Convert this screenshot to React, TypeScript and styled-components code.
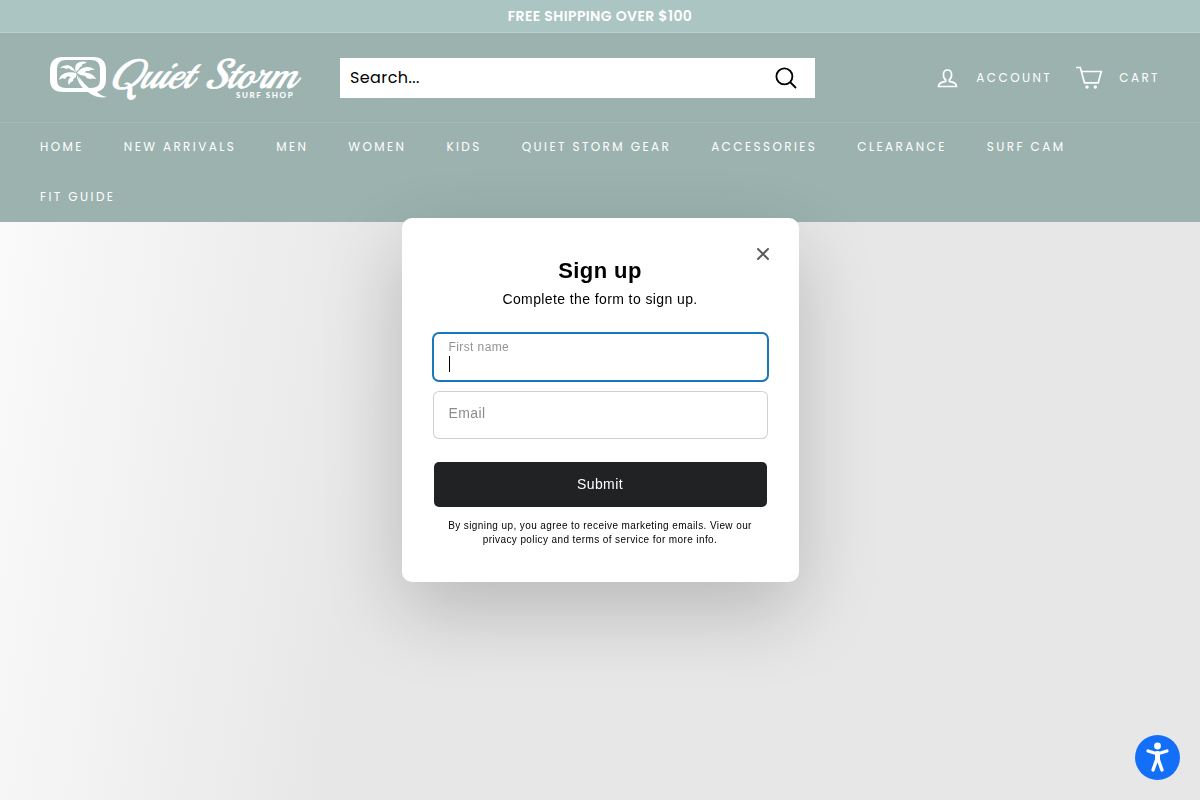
import React, { useState } from "react";
import styled, { createGlobalStyle } from "styled-components";

const GlobalStyle = createGlobalStyle`
  *, *::before, *::after { box-sizing: border-box; }
  body {
    margin: 0;
    background: #e7e7e7;
    color: #000;
    font-family: Poppins, Inter, "Liberation Sans", sans-serif;
    letter-spacing: 0.025em;
    text-rendering: optimizeSpeed;
  }
  button, input { font: inherit; letter-spacing: inherit; color: inherit; text-rendering: inherit; }
`;

const Page = styled.div`
  min-height: 100vh;
  display: flex;
  flex-direction: column;
`;

const Announcement = styled.div`
  height: 33px;
  border-bottom: 1px solid #b9d0cc;
  background: #abc6c2;
  color: #fff;
  font-size: 14px;
  font-weight: 600;
  line-height: 32px;
  text-align: center;
`;

const Header = styled.header`
  background: #9bb2af;
  color: #fff;
`;

const HeaderMain = styled.div`
  display: flex;
  align-items: center;
  height: 90px;
  padding: 0 40px;
  border-bottom: 1px solid #a5bab7;
`;

const LogoLink = styled.a`
  display: flex;
  flex: 0 0 300px;
  padding-left: 10px;
  color: #fff;
`;

const LogoArt = styled.svg`
  width: 256px;
  height: 44px;
  overflow: visible;
`;

const SearchForm = styled.form`
  display: flex;
  align-items: center;
  flex: 0 1 475px;
  height: 40px;
  background: #fff;
  color: #000;
`;

const SearchInput = styled.input`
  flex: 1;
  min-width: 0;
  height: 40px;
  padding: 0 10px;
  border: 0;
  outline: 0;
  background: transparent;
  font-size: 16px;
  &::placeholder { color: #000; opacity: 1; }
`;

const IconButton = styled.button`
  display: flex;
  align-items: center;
  justify-content: center;
  padding: 0;
  border: 0;
  background: transparent;
  cursor: pointer;
`;

const SearchButton = styled(IconButton)`
  width: 58px;
  height: 40px;
`;

const HeaderTools = styled.div`
  display: flex;
  align-items: center;
  gap: 24px;
  margin-left: auto;
`;

const ToolLink = styled.a`
  display: flex;
  align-items: center;
  gap: 15px;
  color: #fff;
  font-size: 12px;
  letter-spacing: 0.2em;
  text-decoration: none;
  text-transform: uppercase;
`;

const Nav = styled.nav`
  padding: 0 40px;
`;

const NavList = styled.ul`
  display: flex;
  flex-wrap: wrap;
  column-gap: 40px;
  margin: 0;
  padding: 0;
  list-style: none;
`;

const NavLink = styled.a`
  display: block;
  color: #fff;
  font-size: 12px;
  line-height: 48px;
  padding-bottom: 2px;
  letter-spacing: 0.2em;
  text-decoration: none;
  text-transform: uppercase;
`;

const Hero = styled.main`
  flex: 1;
  margin-top: -1px;
  background: linear-gradient(98deg, #fafafa 0, #e7e7e7 400px);
`;

const Overlay = styled.div`
  position: fixed;
  inset: 0;
  display: flex;
  align-items: center;
  justify-content: center;
`;

const Dialog = styled.section`
  position: relative;
  width: 397px;
  max-width: 100%;
  padding: 39px 32px 35px;
  border-radius: 10px;
  background: #fff;
  box-shadow: 0 30px 80px rgba(0, 0, 0, 0.2);
  font-family: "Liberation Sans", Arial, sans-serif;
  text-align: center;
`;

const CloseButton = styled(IconButton)`
  position: absolute;
  top: 20px;
  right: 20px;
  width: 32px;
  height: 32px;
  color: #5c5c5c;
`;

const Title = styled.h2`
  margin: 0;
  font-size: 22px;
  line-height: 28px;
`;

const Subtitle = styled.p`
  margin: 4px 0 25px;
  font-size: 14px;
  line-height: 20px;
`;

const Fields = styled.div`
  display: flex;
  flex-direction: column;
  gap: 12px;
`;

const Field = styled.div<{ $focused?: boolean }>`
  display: flex;
  flex-direction: column;
  height: 46px;
  padding: 5px 15px;
  border-radius: 5px;
  box-shadow: 0 0 0 ${(p) => (p.$focused ? "2px #1878b9" : "1px #d0d0d0")};
  text-align: left;
`;

const FieldLabel = styled.label`
  color: #949494;
  font-size: 12px;
  line-height: 16px;
`;

const InputRow = styled.div`
  display: flex;
  align-items: center;
  height: 18px;
`;

const Caret = styled.span`
  width: 1px;
  height: 16px;
  background: #000;
`;

const TextInput = styled.input`
  flex: 1;
  width: 100%;
  min-width: 0;
  padding: 0;
  border: 0;
  outline: 0;
  background: transparent;
  font-size: 14px;
  line-height: 18px;
  &::placeholder { color: #8c8c8c; opacity: 1; }
`;

const EmailInput = styled(TextInput)`
  flex: none;
  height: 32px;
`;

const SubmitButton = styled.button`
  display: block;
  width: 100%;
  height: 45px;
  margin: 24px 0 12px;
  padding: 0 0 2px;
  border: 0;
  border-radius: 5px;
  background: #212224;
  color: #fff;
  font-size: 14px;
  cursor: pointer;
`;

const Legal = styled.p`
  margin: 0;
  font-size: 10px;
  line-height: 14px;
`;

const AccessibilityButton = styled(IconButton)`
  position: fixed;
  right: 20px;
  bottom: 20px;
  width: 45px;
  height: 45px;
  border-radius: 50%;
  background: #146ff8;
`;

const navItems = [
  "Home", "New Arrivals", "Men", "Women", "Kids", "Quiet Storm Gear",
  "Accessories", "Clearance", "Surf Cam", "Fit Guide",
];

function Logo() {
  return (
    <LogoArt viewBox="0 0 256 44" role="img" aria-label="Quiet Storm Surf Shop" fill="#fff">
      <path
        fillRule="evenodd"
        d="M13 1H43Q56 1 56 14V24Q56 33 47 36Q51 40 57 41Q46 43 38 36H13Q0 36 0 24V14Q0 1 13 1ZM16 4Q7 4 7 13V24Q7 32 16 32H34Q30 27 28 20Q33 27 39 32H41Q50 32 50 24V13Q50 4 41 4Z"
      />
      <path d="M26 17C23 9 16 7 10 12Q14 11 16 13Q19 11 21 14Q24 14 26 17ZM26 16C23 8 29 4 37 6L34 8Q32 7 32 10Q29 11 29 13ZM27 17C31 10 40 9 45 14Q41 13 39 15Q36 14 34 17ZM27 17C35 15 44 18 46 23Q42 22 40 23Q37 23 35 20Q31 20 27 17ZM26 17C19 15 10 17 9 24Q12 21 15 23Q17 19 20 21ZM26 17C21 20 16 24 19 29Q20 26 23 25Q23 22 26 21Z" />
      <path d="M26 16Q29 29 43 36L36 35Q27 28 26 16Z" />
      <text x="58" y="32" fontFamily="Playball, Yesteryear, 'Dancing Script', 'Kaushan Script', 'Liberation Serif', serif" fontSize="41" fontStyle="italic" fontWeight="400" letterSpacing="0" stroke="#fff" strokeWidth="0.6">
        Quiet Storm
      </text>
      <text x="186" y="42" fontFamily="Lato, sans-serif" fontSize="8" fontWeight="900" letterSpacing="0.2em">
        SURF SHOP
      </text>
    </LogoArt>
  );
}

export default function App() {
  const [open, setOpen] = useState(true);
  const [firstName, setFirstName] = useState("");

  return (
    <>
      <GlobalStyle />
      <Page>
        <Announcement>FREE SHIPPING OVER $100</Announcement>
        <Header>
          <HeaderMain>
            <LogoLink href="#"><Logo /></LogoLink>
            <SearchForm role="search" onSubmit={(e) => e.preventDefault()}>
              <SearchInput type="text" placeholder="Search..." aria-label="Search" />
              <SearchButton type="submit" aria-label="Search">
                <svg width="22" height="22" viewBox="0 0 22 22" fill="none" stroke="#000" strokeWidth="1.8">
                  <circle cx="9.400" cy="9.400" r="8" />
                  <path d="M15 15l6 6" />
                </svg>
              </SearchButton>
            </SearchForm>
            <HeaderTools>
              <ToolLink href="#account">
                <svg width="24" height="22" viewBox="0 0 24 22" fill="none" stroke="#fff" strokeWidth="1.7">
                  <path d="M8.700 14.300V13C5.600 10.500 5.200 3 10.500 3s4.900 7.500 1.800 10v1.300c4 .6 7.200 2 7.200 5.200H1.500c0-3.200 3.200-4.600 7.200-5.200z" />
                </svg>
                <span>Account</span>
              </ToolLink>
              <ToolLink href="#cart">
                <svg width="28" height="24" viewBox="0 0 28 24" fill="none" stroke="#fff" strokeWidth="1.700">
                  <path d="M0 1.500h4.300l4.200 15.300h13.700L25.300 5.500H5.300" />
                  <circle cx="11" cy="21" r="1.700" fill="#fff" stroke="none" />
                  <circle cx="19.300" cy="21" r="1.700" fill="#fff" stroke="none" />
                </svg>
                <span>Cart</span>
              </ToolLink>
            </HeaderTools>
          </HeaderMain>
          <Nav aria-label="Main">
            <NavList>
              {navItems.map((item) => (
                <li key={item}>
                  <NavLink href="#">{item}</NavLink>
                </li>
              ))}
            </NavList>
          </Nav>
        </Header>
        <Hero />
      </Page>
      {open && (
        <Overlay>
          <Dialog role="dialog" aria-labelledby="signup-title">
            <CloseButton type="button" aria-label="Close" onClick={() => setOpen(false)}>
              <svg width="14" height="14" viewBox="0 0 14 14" fill="none" stroke="currentColor" strokeWidth="2" strokeLinecap="round">
                <path d="M2 2l10 10M12 2L2 12" />
              </svg>
            </CloseButton>
            <Title id="signup-title">Sign up</Title>
            <Subtitle>Complete the form to sign up.</Subtitle>
            <form onSubmit={(e) => e.preventDefault()}>
              <Fields>
                <Field $focused>
                  <FieldLabel htmlFor="first-name">First name</FieldLabel>
                  <InputRow>
                    {firstName === "" && <Caret />}
                    <TextInput
                      id="first-name"
                      type="text"
                      value={firstName}
                      onChange={(e) => setFirstName(e.target.value)}
                    />
                  </InputRow>
                </Field>
                <Field>
                  <EmailInput type="email" placeholder="Email" aria-label="Email" />
                </Field>
              </Fields>
              <SubmitButton type="submit">Submit</SubmitButton>
            </form>
            <Legal>
              By signing up, you agree to receive marketing emails. View our privacy policy and terms of service for more info.
            </Legal>
          </Dialog>
        </Overlay>
      )}
      <AccessibilityButton type="button" aria-label="Accessibility options">
        <svg width="25" height="31" viewBox="0 0 25 31" fill="none" stroke="#fff" strokeLinecap="round" strokeLinejoin="round">
          <circle cx="12.500" cy="4" r="3.400" fill="#fff" stroke="none" />
          <path d="M3 8.900L9.500 11h6L22 8.900" strokeWidth="3.200" />
          <path d="M12.500 11.500v6" strokeWidth="5" />
          <path d="M11.700 17.500L8 28M13.300 17.500L17 28" strokeWidth="3.400" />
        </svg>
      </AccessibilityButton>
    </>
  );
}
